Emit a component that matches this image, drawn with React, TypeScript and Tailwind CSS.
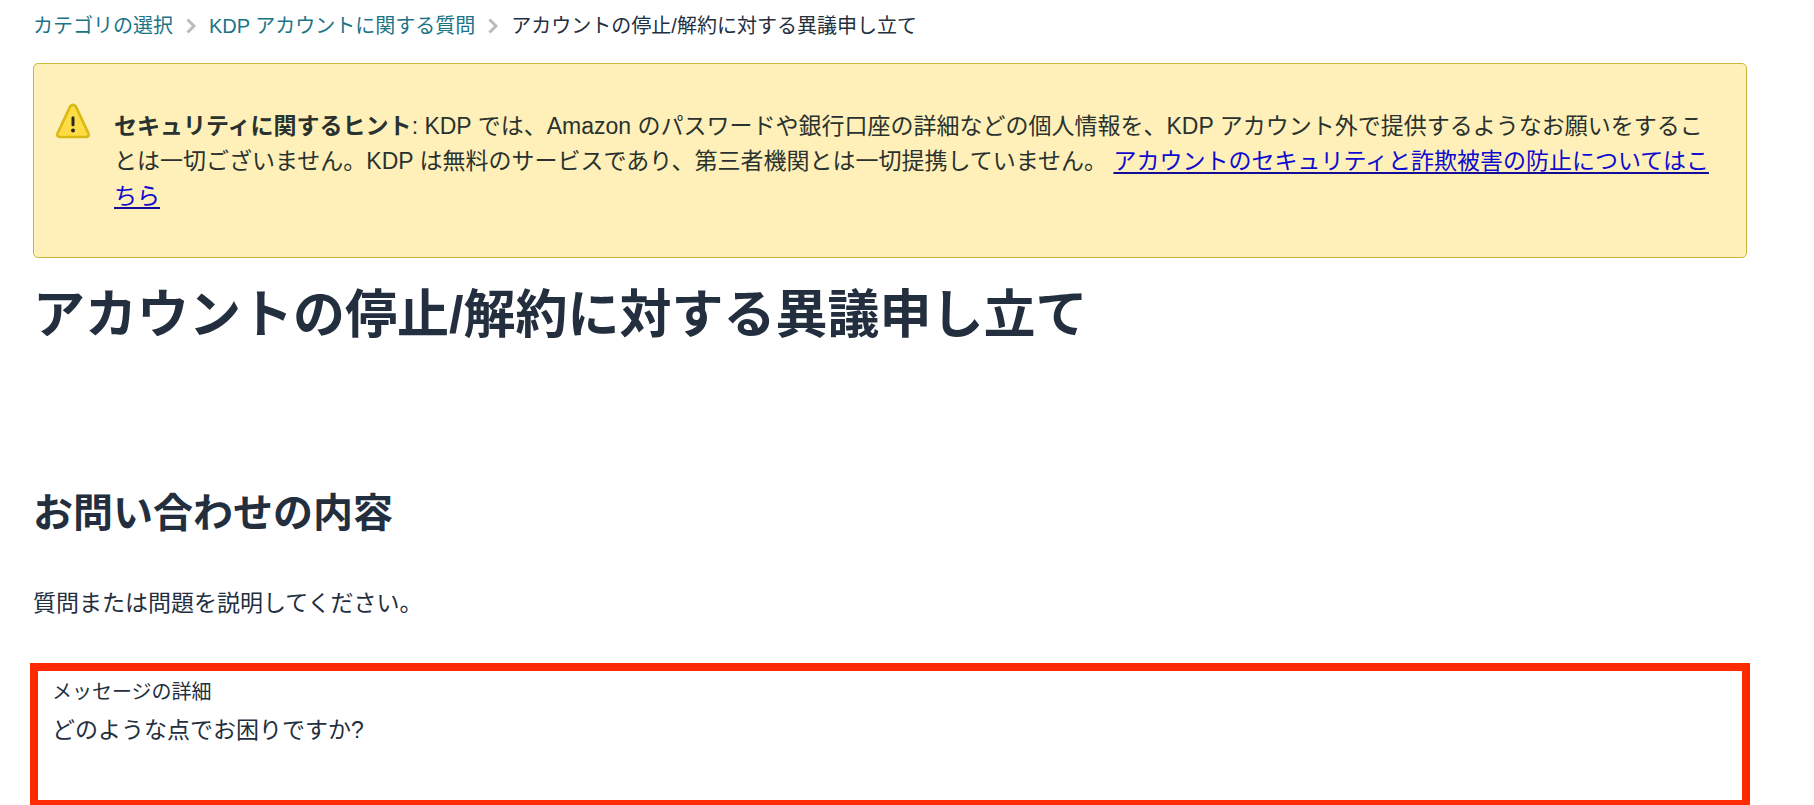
import { useState } from "react";

function Chevron() {
  return (
    <svg width="10" height="16" viewBox="0 0 10 16" fill="none" aria-hidden="true">
      <path d="M1.5 1.5L8 8L1.5 14.5" stroke="#b9bcbc" strokeWidth="3" />
    </svg>
  );
}

function WarningIcon() {
  return (
    <svg
      className="shrink-0"
      width="36"
      height="36"
      viewBox="0 0 36 36"
      aria-hidden="true"
    >
      <path
        d="M15.2 3.4Q18 0.4 20.8 3.4L33.4 30.2Q34.6 33.6 31.2 34H4.8Q1.4 33.6 2.6 30.2Z"
        fill="#fddc45"
        stroke="#dab913"
        strokeWidth="2.6"
        strokeLinejoin="round"
      />
      <path d="M18 14.8V21.8" stroke="#2b2b26" strokeWidth="3" strokeLinecap="round" />
      <circle cx="18" cy="27.4" r="2" fill="#2b2b26" />
    </svg>
  );
}

function Breadcrumb() {
  return (
    <nav aria-label="breadcrumb">
      <ol className="flex items-center gap-[13px] text-[20px] leading-[30px]">
        <li>
          <a href="#" className="text-[#1b7486]">カテゴリの選択</a>
        </li>
        <li>
          <Chevron />
        </li>
        <li>
          <a href="#" className="text-[#1b7486]">KDP アカウントに関する質問</a>
        </li>
        <li>
          <Chevron />
        </li>
        <li aria-current="page">アカウントの停止/解約に対する異議申し立て</li>
      </ol>
    </nav>
  );
}

export default function App() {
  const [message, setMessage] = useState("");

  return (
    <main
      lang="ja"
      className="bg-white px-[30px] pt-[11px] mr-[34px] text-[#232f3e] font-['Liberation_Sans','Noto_Sans_CJK_JP',sans-serif]"
    >
      <div className="px-[3px]">
        <Breadcrumb />

        {/* Security notice */}
        <section className="mt-[22px] flex gap-[23px] rounded-[5px] border border-[#cab936] bg-[#fef0b8] pt-[39px] pb-[43px] pl-[21px] pr-[30px]">
          <WarningIcon />
          <p className="pt-[6px] text-[23px] leading-[35px] text-[#2a322f]">
            <strong>セキュリティに関するヒント</strong>: KDP では、Amazon
            のパスワードや銀行口座の詳細などの個人情報を、KDP
            アカウント外で提供するようなお願いをすることは一切ございません。KDP
            は無料のサービスであり、第三者機関とは一切提携していません。{" "}
            <a
              href="#"
              className="text-[#0f0ad0] underline decoration-[#120c98] decoration-2 underline-offset-[3px]"
            >
              アカウントのセキュリティと詐欺被害の防止についてはこちら
            </a>
          </p>
        </section>

        <h1 className="mt-[21px] text-[52px] leading-[72px] font-bold">
          アカウントの停止/解約に対する異議申し立て
        </h1>

        <h2 className="mt-[132px] text-[40px] leading-[60px] font-bold">
          お問い合わせの内容
        </h2>
        <p className="mt-[43px] text-[23px] leading-[35px]">
          質問または問題を説明してください。
        </p>
      </div>

      {/* Message box */}
      <div className="mt-[42px] border-8 border-b-[5px] border-[#ff2a00] px-[14px] pt-[6px]">
        <label htmlFor="message" className="block text-[20px] leading-[30px]">
          メッセージの詳細
        </label>
        <textarea
          id="message"
          value={message}
          onChange={(e) => setMessage(e.target.value)}
          placeholder="どのような点でお困りですか?"
          className="mt-[6px] block h-[87px] w-full resize-none text-[23px] leading-[35px] placeholder:text-[#232f3e] placeholder:opacity-100 focus:outline-none"
        />
      </div>
    </main>
  );
}
